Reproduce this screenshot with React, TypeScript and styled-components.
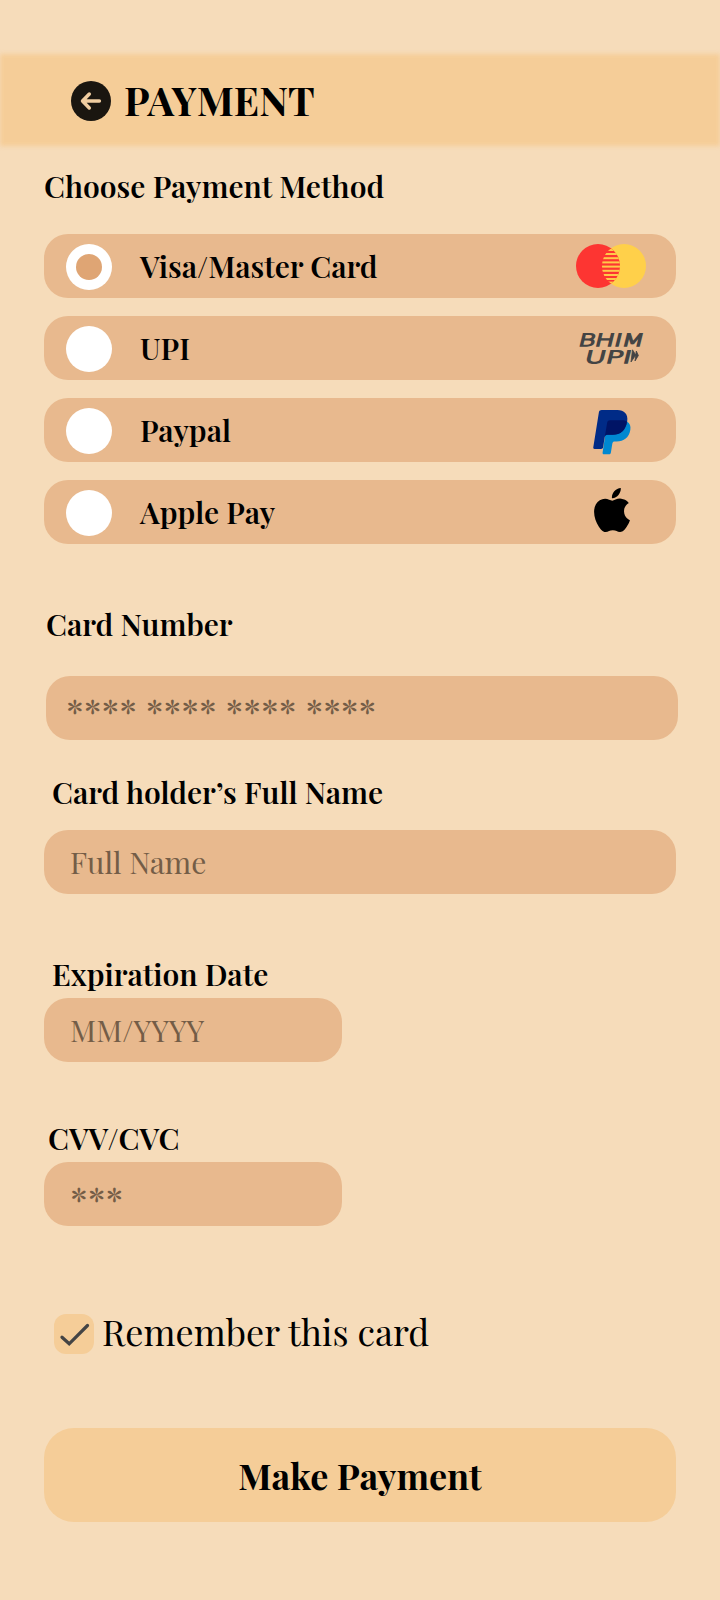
import React, { useState } from 'react';
import styled, { createGlobalStyle } from 'styled-components';
import { SiApple } from 'react-icons/si';

const GlobalStyle = createGlobalStyle`
  *, *::before { box-sizing: border-box; }
  body {
    margin: 0;
    background: #f6dcba;
    color: #000;
    font-family: 'Playfair Display', 'Liberation Serif', serif;
  }
  button { border: 0; background: none; padding: 0; color: inherit; font: inherit; text-align: left; cursor: pointer; }
`;

const Screen = styled.main`
  width: 720px;
  min-height: 1600px;
  padding: 54px 44px 0;
  overflow: hidden;
`;

const Header = styled.header`
  position: relative;
  isolation: isolate;
  display: flex;
  align-items: center;
  gap: 13px;
  height: 92px;
  margin: 0 -44px;
  padding: 2px 0 0 71px;

  &::before {
    content: '';
    position: absolute;
    inset: 0;
    z-index: -1;
    background: #f5cd98;
    filter: blur(2px);
  }
`;

const BackButton = styled.button`
  display: flex;
  width: 40px;
  height: 40px;
`;

const Heading = styled.h1`
  margin: 0;
  padding-bottom: 3px;
  font-size: 40px;
  line-height: 53px;
  font-weight: 700;
`;

const Label = styled.h2<{ $gap: number; $below: number; $indent?: number }>`
  margin: ${p => p.$gap}px 0 ${p => p.$below}px ${p => p.$indent ?? 0}px;
  font-size: 30px;
  line-height: 40px;
  font-weight: 600;
  white-space: nowrap;
`;

const MethodList = styled.div`
  display: flex;
  flex-direction: column;
  gap: 18px;
`;

const MethodRow = styled.button`
  display: flex;
  align-items: center;
  height: 64px;
  padding: 0 20px 0 22px;
  border-radius: 24px;
  background: #e8b98e;
`;

const Radio = styled.span`
  display: flex;
  align-items: center;
  justify-content: center;
  flex: none;
  width: 46px;
  height: 46px;
  margin-top: 2px;
  border-radius: 50%;
  background: #fff;
`;

const RadioDot = styled.span`
  width: 26px;
  height: 26px;
  border-radius: 50%;
  background: #dfa574;
`;

const MethodName = styled.span`
  flex: 1;
  margin-left: 28px;
  font-size: 30px;
  line-height: 40px;
  font-weight: 600;
`;

const LogoSlot = styled.span<{ $up?: number; $down?: number; $left?: number }>`
  display: flex;
  align-items: center;
  justify-content: center;
  width: 88px;
  height: 64px;
  padding: ${p => p.$down ?? 0}px ${p => p.$left ?? 0}px ${p => p.$up ?? 0}px 0;
  svg { display: block; flex: none; }
`;

const Field = styled.div<{ $short?: boolean; $shift?: number }>`
  display: flex;
  align-items: center;
  width: ${p => (p.$short ? 298 : 632)}px;
  height: 64px;
  margin-left: ${p => p.$shift ?? 0}px;
  padding-left: ${p => (p.$shift ? 20 : 26)}px;
  border-radius: 24px;
  background: #e8b98e;
  color: #745d47;
`;

const Hint = styled.span`
  font-size: 30px;
  line-height: 40px;
`;

const Mask = styled.span<{ $drop: number }>`
  padding-top: ${p => p.$drop}px;
  font-size: 36px;
  line-height: 40px;
`;

const Remember = styled.button`
  display: flex;
  align-items: center;
  gap: 8px;
  height: 40px;
  margin: 88px 0 0 10px;
`;

const CheckBox = styled.span`
  display: flex;
  width: 40px;
  height: 40px;
  border-radius: 12px;
  background: #f5cd98;
`;

const RememberText = styled.span`
  padding-bottom: 6px;
  font-size: 36px;
  line-height: 48px;
`;

const PayButton = styled.button`
  display: flex;
  align-items: center;
  justify-content: center;
  width: 632px;
  height: 94px;
  margin-top: 74px;
  border-radius: 30px;
  background: #f5cd98;
  font-size: 36px;
  line-height: 48px;
  font-weight: 700;
`;

const BackIcon = () => (
  <svg width="40" height="40" viewBox="0 0 40 40" fill="none">
    <circle cx="20" cy="20" r="20" fill="#1a1610" />
    <path d="M28.4 20H12M18.3 13L11.5 20L18.3 27" stroke="#f0cda0" strokeWidth="3.5" strokeLinecap="round" strokeLinejoin="round" />
  </svg>
);

const stripes = [6, 10, 14.2, 18.4, 22.6, 26.8, 31, 35, 38.6];

const MasterCardLogo = () => (
  <svg width="70" height="44" viewBox="0 0 70 44">
    <defs>
      <clipPath id="lens"><path d="M35 4.2A22 22 0 0 1 35 39.8A22 22 0 0 1 35 4.2Z" /></clipPath>
    </defs>
    <circle cx="48" cy="22" r="22" fill="#ffd04a" />
    <circle cx="22" cy="22" r="22" fill="#fd3532" />
    <g clipPath="url(#lens)">
      {stripes.map(y => <rect key={y} x="24" y={y - 1} width="22" height="2" fill="#ffc849" />)}
    </g>
  </svg>
);

const BhimLogo = () => (
  <svg
    width="80" height="56" viewBox="-6 -11 80 56" fill="#444" stroke="#444" strokeWidth="1.4"
    fontFamily="'DejaVu Sans', sans-serif" fontWeight="200"
  >
    <g transform="translate(-0.6 14.7) skewX(-14)">
      <text x="0" y="0" fontSize="17" textLength="65.5" lengthAdjust="spacingAndGlyphs">BHIM</text>
    </g>
    <g transform="translate(5.8 31.7) skewX(-14)">
      <text x="0" y="0" fontSize="17" textLength="46.5" lengthAdjust="spacingAndGlyphs">UPI</text>
    </g>
    <path d="M54.5 18.8L57.8 24L53 31ZM58.3 20L60.4 24.5L57 30Z" strokeWidth="0.8" />
  </svg>
);

const PaypalLogo = () => (
  <svg width="38" height="45" viewBox="0 0 38 45">
    <path d="M33.8 11.5C37 13.3 38 16.3 37.3 20C36 27.5 31 31.5 23.5 31.5H22C20.3 31.5 19.6 32 19.3 33.8L17.9 42.4C17.7 43.6 17 44.3 15.8 44.3H11C9.9 44.3 9.4 43.6 9.6 42.5L13 20Z" fill="#0088d1" />
    <path d="M8.6 0H24.5C31 0 35.4 4 34.2 11.5C32.8 20.5 27.5 24.8 19.5 24.8H14.8C13 24.8 12 25.6 11.7 27.3L10.1 37.2C9.9 38.3 9.2 38.9 8.1 38.9H1.6C.6 38.9 .1 38.2 .3 37.2L5.9 2.2C6.1 .8 7.2 0 8.6 0Z" fill="#002b87" />
    <path d="M17.2 10.3H29C31 10.3 32.6 10.7 33.9 11.5C32.6 20.5 27.5 24.8 19.5 24.8H14.8C13.2 24.8 12.2 25.4 11.8 26.7L14.2 12.5C14.5 11 15.6 10.3 17.2 10.3Z" fill="#001465" />
  </svg>
);

const CheckIcon = () => (
  <svg width="40" height="40" viewBox="0 0 40 40" fill="none">
    <path d="M8 23.2L15.2 29.8L33.5 11.5" stroke="#444" strokeWidth="3.2" strokeLinecap="round" />
  </svg>
);

const methods = [
  { name: 'Visa/Master Card', logo: <LogoSlot $left={2}><MasterCardLogo /></LogoSlot> },
  { name: 'UPI', logo: <LogoSlot><BhimLogo /></LogoSlot> },
  { name: 'Paypal', logo: <LogoSlot $down={4}><PaypalLogo /></LogoSlot> },
  { name: 'Apple Pay', logo: <LogoSlot $up={4}><SiApple size={44} /></LogoSlot> },
];

export default function App() {
  const [selected, setSelected] = useState(0);
  const [remember, setRemember] = useState(true);

  return (
    <Screen>
      <GlobalStyle />
      <Header>
        <BackButton aria-label="Back"><BackIcon /></BackButton>
        <Heading>PAYMENT</Heading>
      </Header>

      <Label $gap={20} $below={28}>Choose Payment Method</Label>
      <MethodList>
        {methods.map((m, i) => (
          <MethodRow key={m.name} onClick={() => setSelected(i)}>
            <Radio>{i === selected && <RadioDot />}</Radio>
            <MethodName>{m.name}</MethodName>
            {m.logo}
          </MethodRow>
        ))}
      </MethodList>

      <Label $gap={60} $below={32} $indent={2}>Card Number</Label>
      <Field $shift={2}><Mask $drop={4}>**** **** **** ****</Mask></Field>

      <Label $gap={32} $below={18} $indent={8}>Card holder’s Full Name</Label>
      <Field><Hint>Full Name</Hint></Field>

      <Label $gap={60} $below={4} $indent={8}>Expiration Date</Label>
      <Field $short><Hint>MM/YYYY</Hint></Field>

      <Label $gap={56} $below={4} $indent={4}>CVV/CVC</Label>
      <Field $short><Mask $drop={8}>***</Mask></Field>

      <Remember onClick={() => setRemember(!remember)}>
        <CheckBox>{remember && <CheckIcon />}</CheckBox>
        <RememberText>Remember this card</RememberText>
      </Remember>

      <PayButton>Make Payment</PayButton>
    </Screen>
  );
}
